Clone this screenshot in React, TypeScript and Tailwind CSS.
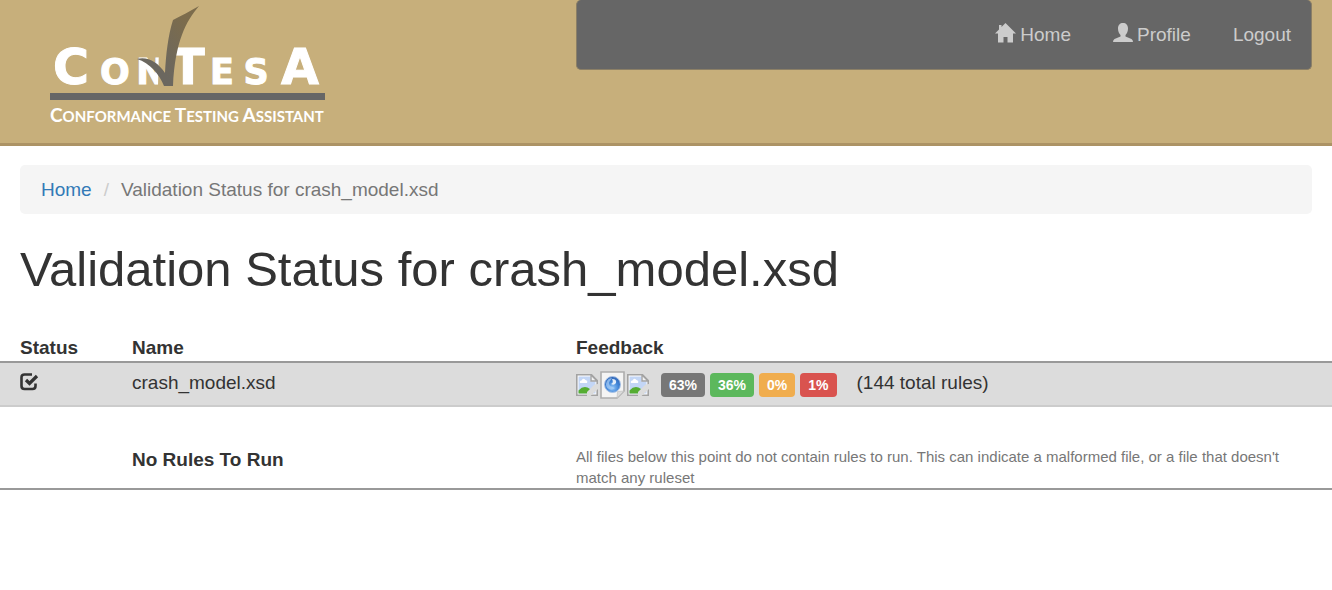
import type { ReactNode } from "react";

const badges = [
  { label: "63%", color: "bg-[#777777]" },
  { label: "36%", color: "bg-[#5cb85c]" },
  { label: "0%", color: "bg-[#f0ad4e]" },
  { label: "1%", color: "bg-[#d9534f]" },
];

function Logo() {
  return (
    <svg viewBox="-9 0 300 130" className="h-[130px] w-[300px]" role="img" aria-label="ConTesA Conformance Testing Assistant">
      <defs>
        <linearGradient id="tick" x1="0" y1="1" x2="1" y2="0">
          <stop offset="0.3" stopColor="#6b675f" />
          <stop offset="0.8" stopColor="#7c6c4c" />
        </linearGradient>
      </defs>
      <g
        fill="#ffffff"
        stroke="#ffffff"
        strokeWidth="1"
        textAnchor="middle"
        fontFamily="'DejaVu Sans', sans-serif"
        fontWeight="700"
      >
        <text x="22" y="84" fontSize="49">C</text>
        <text x="66" y="84" fontSize="35">O</text>
        <text x="102" y="84" fontSize="35">N</text>
        <text x="139" y="84" fontSize="49">T</text>
        <text x="173" y="84" fontSize="35">E</text>
        <text x="207" y="84" fontSize="35">S</text>
        <text x="251" y="84" fontSize="49">A</text>
      </g>
      <path
        d="M110 47L125 47C119 61 118 73 119 86L109 86Z"
        fill="#c7af7b"
      />
      <path
        d="M88 59C98 56 109 62 116 73C117 54 119 36 124 20C132 16 141 11 150 6C137 21 126 42 124 86H115C110 74 101 63 88 59Z"
        fill="url(#tick)"
      />
      <rect x="1" y="93" width="275" height="7" fill="#666666" />
      <text x="1" y="122" fill="#ffffff" fontFamily="Lato, sans-serif" fontWeight="700" fontSize="19">
        C<tspan fontSize="15">ONFORMANCE </tspan>T<tspan fontSize="15">ESTING </tspan>A<tspan fontSize="15">SSISTANT</tspan>
      </text>
    </svg>
  );
}

function HomeIcon() {
  return (
    <svg viewBox="0 0 21 20" className="mb-[3px] h-5 w-[21px]" fill="currentColor" aria-hidden="true">
      <path d="M10.500 0L21 10.500H18V19.500H12.500V14H8.500V19.500H3V10.500H0L4 6.500V2H6.500V4Z" />
    </svg>
  );
}

function UserIcon() {
  return (
    <svg viewBox="0 0 20 20" className="mb-[3px] h-5 w-5" fill="currentColor" aria-hidden="true">
      <path d="M10 0C7 0 5 2 5 5.500C5 8.500 6 10.500 7.500 12V13.500L1.500 16Q0 16.800 0 19H20Q20 16.800 18.500 16L12.500 13.500V12C14 10.500 15 8.500 15 5.500C15 2 13 0 10 0Z" />
    </svg>
  );
}

function CheckIcon() {
  return (
    <svg viewBox="0 0 19 18" className="h-[18px] w-[19px]" fill="none" stroke="currentColor" role="img" aria-label="Valid">
      <path d="M12 1.500H4.500Q1.500 1.500 1.500 4.500V13Q1.500 16 4.500 16H12.500Q15.500 16 15.500 13V10.500" strokeWidth="2.600" />
      <path d="M6 7L9.500 10.500L17 3" strokeWidth="3.200" />
    </svg>
  );
}

function PictureIcon() {
  return (
    <svg viewBox="0 0 22 22" className="h-[22px] w-[22px]" role="img" aria-label="Report">
      <path d="M.8 .8H15.500L21.200 6.500V21.200H.8Z" fill="#ffffff" stroke="#a3a3a3" strokeWidth="1.600" />
      <path d="M2.500 2.500H14.500V7.500H19.500V19.500H2.500Z" fill="#c3d6f6" />
      <path d="M4 9Q3 7 5.500 6.500Q7 3.500 9.500 6Q12 6.500 11 9Z" fill="#ffffff" />
      <path d="M2.500 16.500Q8 10.500 14 15L17 19.500H2.500Z" fill="#55ad32" />
      <path d="M15 1V7H21Z" fill="#f3f3f3" stroke="#a3a3a3" strokeWidth="1.400" />
      <path d="M22 10L18.500 10.500L11 18V22H14.500L22 15Z" fill="#dcdcdc" />
    </svg>
  );
}

function GlobePageIcon() {
  return (
    <svg viewBox="0 0 25 28" className="h-7 w-[25px]" role="img" aria-label="Web report">
      <defs>
        <radialGradient id="globe" cx="0.5" cy="0.7" r="0.65">
          <stop offset="0" stopColor="#8fc4f7" />
          <stop offset="0.6" stopColor="#3f83d6" />
          <stop offset="1" stopColor="#3369b8" />
        </radialGradient>
      </defs>
      <path d="M1 1H24V20L17 27H1Z" fill="#f4f4f4" stroke="#adadad" strokeWidth="1.600" />
      <path d="M17 27L17.500 20.500L24 20Z" fill="#dadada" stroke="#bdbdbd" strokeWidth=".6" />
      <circle cx="12.500" cy="13.500" r="8" fill="url(#globe)" stroke="#a9c2e6" />
      <path d="M6 13Q7 7 12 7L10 10Q8 12 10 15L15 17Q12 20 9 18Q6 17 6 13Z" fill="#a9cff7" opacity=".7" />
      <path d="M12 8Q17 8 16 12Q14 15 11 13Q14 12 12 8Z" fill="#ffffff" opacity=".85" />
    </svg>
  );
}

function NavLink({ children }: { children: ReactNode }) {
  return (
    <a href="#" className="flex items-center gap-1 text-[#cccccc]">
      {children}
    </a>
  );
}

export default function App() {
  return (
    <div className="font-['Liberation_Sans',Arial,sans-serif] text-[19px] leading-[27px] text-[#333333]">
      <header className="grid grid-cols-12 items-start border-b-3 border-[#ac9365] bg-[#c7af7b] pb-[13px]">
        <div className="col-span-5 pl-10">
          <Logo />
        </div>
        <nav className="col-span-7 mr-5 ml-[21px] flex h-[70px] items-center justify-end gap-[42px] rounded-[5px] border border-t-0 border-[#8b7f66] bg-[#666666] px-5">
          <NavLink>
            <HomeIcon />
            Home
          </NavLink>
          <NavLink>
            <UserIcon />
            Profile
          </NavLink>
          <NavLink>Logout</NavLink>
        </nav>
      </header>

      <main>
        <div className="px-5">
          <ol className="mt-[19px] flex rounded-[5px] bg-[#f5f5f5] px-[21px] py-[11px]">
            <li>
              <a href="#" className="text-[#337ab7]">Home</a>
            </li>
            <li aria-hidden="true" className="px-3 text-[#cccccc]">/</li>
            <li className="text-[#777777]">Validation Status for crash_model.xsd</li>
          </ol>
          <h1 className="mt-7 text-[49px] leading-[54px]">Validation Status for crash_model.xsd</h1>
        </div>

        <table className="mt-[38px] w-full table-fixed border-collapse text-left">
          <colgroup>
            <col className="w-1/12" />
            <col className="w-4/12" />
            <col className="w-7/12" />
          </colgroup>
          <thead>
            <tr className="border-b-2 border-[#999999]">
              <th className="pl-5">Status</th>
              <th className="pl-[21px]">Name</th>
              <th className="pl-[21px]">Feedback</th>
            </tr>
          </thead>
          <tbody>
            <tr className="h-11 border-b-2 border-[#cccccc] bg-[#dcdcdc]">
              <td className="pb-1 pl-5"><CheckIcon /></td>
              <td className="pb-1 pl-[21px]">crash_model.xsd</td>
              <td className="pt-[2px] pl-[21px]">
                <div className="flex items-center">
                  <div className="mr-3 flex items-center gap-[2px]">
                    <PictureIcon />
                    <GlobePageIcon />
                    <PictureIcon />
                  </div>
                  <div className="flex gap-[5px]">
                    {badges.map((badge) => (
                      <span
                        key={badge.label}
                        className={`rounded-[4px] px-2 text-[14px] leading-6 font-bold text-white ${badge.color}`}
                      >
                        {badge.label}
                      </span>
                    ))}
                  </div>
                  <span className="pb-[6px] pl-5">(144 total rules)</span>
                </div>
              </td>
            </tr>
            <tr className="border-b-2 border-[#999999] align-top">
              <td />
              <th className="pt-[39px] pl-[21px]">No Rules To Run</th>
              <td className="pt-[39px] pr-5 pl-[21px] text-[15px] leading-[21px] text-[#777777]">
                All files below this point do not contain rules to run. This can indicate a malformed file, or a file that doesn't match any ruleset
              </td>
            </tr>
          </tbody>
        </table>
      </main>
    </div>
  );
}
